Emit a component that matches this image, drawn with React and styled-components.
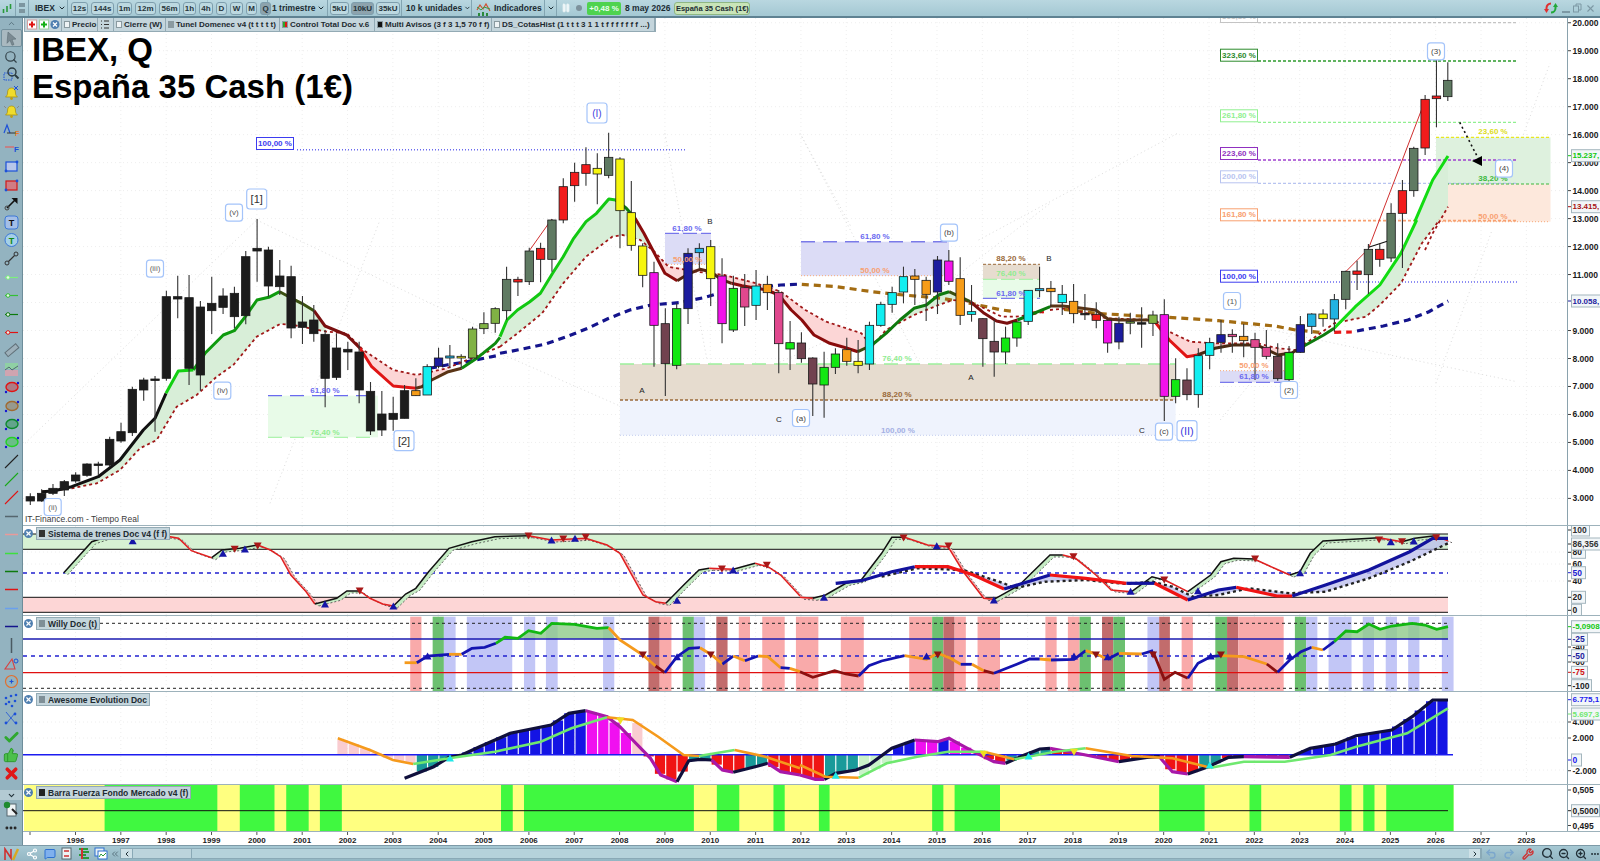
import React from 'react';
import styled, { createGlobalStyle } from 'styled-components';
import { ChevronDown, ChevronUp, Search, ZoomIn, ZoomOut, Share2, MessageSquare, Undo2, Redo2, Wrench, ChevronLeft, ChevronRight, ChevronsLeft, Check, ThumbsUp, X, Pause, MoreHorizontal } from 'lucide-react';

const GlobalStyle = createGlobalStyle`
  html, body { margin: 0; padding: 0; background: #fff; }
  body { font-family: "Liberation Sans", Arial, sans-serif; }
`;

const Page = styled.div`
  width: 1600px;
  height: 861px;
  overflow: hidden;
  display: flex;
  flex-direction: column;
`;

/* ---------- top toolbar ---------- */
const TopBar = styled.div`
  height: 18px;
  flex: none;
  display: flex;
  align-items: center;
  box-sizing: border-box;
  background: linear-gradient(#b9d7e0, #a4c8d3);
  border-bottom: 2px solid #5f8292;
  font-size: 8.5px;
  color: #1c2c33;
`;
const Group = styled.div`
  width: ${p => p.$w}px;
  flex: none;
  height: 100%;
  box-sizing: border-box;
  display: flex;
  align-items: center;
  justify-content: ${p => p.$center ? 'center' : 'flex-start'};
  gap: ${p => p.$gap || 0}px;
  padding-left: ${p => p.$pad || 0}px;
  border-right: ${p => p.$plain ? 'none' : '1px solid #83a5b2'};
  white-space: nowrap;
`;
const ToolBtn = styled.div`
  width: ${p => p.$w}px;
  height: 13px;
  flex: none;
  box-sizing: border-box;
  border: 1px solid #7e9ead;
  border-radius: 3px;
  background: ${p => p.$active ? '#8da3ad' : '#bcd8e0'};
  display: flex;
  align-items: center;
  justify-content: center;
  font-weight: bold;
  font-size: 8px;
  color: #26343a;
`;
const PctBadge = styled.div`
  width: 34px;
  height: 13px;
  background: #4fd34f;
  color: #eafff0;
  font-size: 8px;
  font-weight: bold;
  display: flex;
  align-items: center;
  justify-content: center;
  border-radius: 2px;
`;
const NameChip = styled.div`
  width: 76px;
  height: 13px;
  box-sizing: border-box;
  background: #c9e4b8;
  border: 1px solid #8fb783;
  border-radius: 3px;
  font-size: 7.5px;
  font-weight: bold;
  display: flex;
  align-items: center;
  justify-content: center;
`;
const Spacer = styled.div`
  flex: 1;
`;
const WinBtns = styled.div`
  width: 42px;
  display: flex;
  align-items: center;
  gap: 3px;
  color: #7c98a4;
  padding-left: 4px;
  box-sizing: border-box;
`;

/* ---------- body ---------- */
const Middle = styled.div`
  flex: 1;
  display: flex;
  min-height: 0;
`;
const Rail = styled.div`
  width: 23px;
  flex: none;
  box-sizing: border-box;
  background: #93b3c0;
  border-right: 1px solid #6e8d9a;
  display: flex;
  flex-direction: column;
  align-items: center;
`;
const RailTop = styled.div`
  height: 11px;
  flex: none;
  display: flex;
  align-items: center;
  color: #48626d;
`;
const RailItem = styled.div`
  width: 21px;
  height: 18.4px;
  flex: none;
  display: flex;
  align-items: center;
  justify-content: center;
  box-sizing: border-box;
  ${p => p.$active && 'background:#a9b9c0;border:1px solid #73919e;border-radius:2px;'}
`;
const RailFold = styled.div`
  width: 100%;
  height: 10px;
  margin-top: 7px;
  background: #b3cad3;
  display: flex;
  align-items: center;
  justify-content: center;
  color: #22323a;
`;
const Charts = styled.div`
  flex: 1;
  display: flex;
  flex-direction: column;
  min-width: 0;
`;
const PaneRow = styled.div`
  height: ${p => p.$h}px;
  flex: none;
  box-sizing: border-box;
  display: flex;
  border-bottom: 1px solid #9db2bb;
`;
const Plot = styled.div`
  position: relative;
  flex: 1;
  overflow: hidden;
`;
const AxisCol = styled.div`
  width: 33px;
  flex: none;
  box-sizing: border-box;
  border-left: 1px solid #8aa2ad;
`;
const Fill = styled.svg`
  display: block;
  width: 100%;
  height: 100%;
`;
const Title = styled.div`
  position: absolute;
  left: 9px;
  top: 13px;
  font-size: 33px;
  line-height: 37px;
  font-weight: bold;
  color: #000;
  white-space: nowrap;
`;
const Source = styled.div`
  position: absolute;
  left: 2px;
  bottom: 0;
  font-size: 8.5px;
  line-height: 11px;
  color: #3b3b3b;
`;
const LegendBar = styled.div`
  position: absolute;
  left: 1px;
  top: 0;
  height: 14px;
  display: flex;
  align-items: stretch;
  background: #c4d5dc;
  border: 1px solid #93aab4;
  border-top: none;
  box-sizing: border-box;
  font-size: 8px;
  font-weight: bold;
  color: #1d2a30;
`;
const LegendItem = styled.div`
  width: ${p => p.$w}px;
  flex: none;
  box-sizing: border-box;
  padding-left: 2px;
  display: flex;
  align-items: center;
  gap: 2px;
  white-space: nowrap;
  overflow: hidden;
  border-right: 1px solid #93aab4;
`;
const Swatch = styled.span`
  width: 6px;
  height: 7px;
  flex: none;
  box-sizing: border-box;
  background: ${p => p.$c};
  border: 1px solid ${p => p.$line || '#8a9aa0'};
`;
const PaneLegend = styled.div`
  position: absolute;
  left: 1px;
  top: 1px;
  height: 13px;
  box-sizing: border-box;
  display: flex;
  align-items: center;
  gap: 3px;
  font-size: 8.5px;
  font-weight: bold;
  color: #1d2a30;
  white-space: nowrap;
`;
const PaneLegendChip = styled.div`
  height: 13px;
  box-sizing: border-box;
  padding: 0 2px;
  display: flex;
  align-items: center;
  gap: 3px;
  background: #c4d5dc;
  border: 1px solid #93aab4;
`;
const CloseDot = styled.span`
  width: 9px;
  height: 9px;
  flex: none;
  border-radius: 50%;
  background: #4f7fb0;
  color: #fff;
  display: flex;
  align-items: center;
  justify-content: center;
`;
const TimeRow = styled.div`
  height: 13px;
  flex: none;
`;

/* ---------- bottom bar ---------- */
const BottomBar = styled.div`
  height: 16px;
  flex: none;
  display: flex;
  align-items: center;
  background: linear-gradient(#a6c8d3, #93b6c3);
  border-top: 1px solid #7d9aa7;
  box-sizing: border-box;
  color: #fff;
`;
const BarSlot = styled.div`
  width: ${p => p.$w}px;
  flex: none;
  display: flex;
  align-items: center;
  justify-content: center;
  height: 100%;
`;
const ScrollTrack = styled.div`
  flex: 1;
  height: 11px;
  display: flex;
  align-items: stretch;
  background: #b5d2db;
  border: 1px solid #8aa9b6;
  box-sizing: border-box;
`;
const ScrollBtn = styled.div`
  width: 11px;
  flex: none;
  background: #cfe1e7;
  border-right: 1px solid #8aa9b6;
  display: flex;
  align-items: center;
  justify-content: center;
  color: #22323a;
`;
const ScrollThumb = styled.div`
  width: 58px;
  flex: none;
  background: #bcd4dc;
  border-right: 1px solid #8aa9b6;
`;

/* ---------- chart text ---------- */
const Txt = styled.text`
  font-family: "Liberation Sans", Arial, sans-serif;
  font-size: ${p => p.$s || 8}px;
  font-weight: ${p => p.$n ? 'normal' : 'bold'};
  fill: ${p => p.$c || '#222'};
  text-anchor: ${p => p.$a || 'middle'};
  dominant-baseline: central;
`;

/* reading scales: points are noted per region of the chart */
const scaler = (ox, sx, oy) => pts => pts.map(([x, y]) => [ox + x / sx, oy + y / 3]);
const ML = scaler(0, 3, 120);
const MM = scaler(500, 2.85, 120);
const MR = scaler(1050, 2.85, 220);
const MT = scaler(800, 1.96, 0);
const LL = scaler(0, 1.96, 520);
const LR = scaler(800, 1.96, 520);
const str = pts => pts.map(p => p[0].toFixed(1) + ',' + p[1].toFixed(1)).join(' ');

const yearX = y => 75.5 + (y - 1996) * 45.34;
const candleX = i => 30.3 + (i - 1) * 11.34;

const COL = { k: '#1c1c1c', g: '#5f7a62', r: '#f21c1c', y: '#f6f60e', m: '#f212ea', b: '#71424f', l: '#12e812', n: '#1c1c9e', c: '#12eef0', o: '#f69c18', p: '#e0488e', t: '#22b2e2', v: '#80b244' };

const C1 = [
  [1120,1155,1130,1143,'k'],[1108,1145,1120,1143,'k'],[1092,1125,1105,1120,'k'],[1080,1128,1085,1110,'k'],[1057,1088,1065,1083,'k'],[1030,1070,1032,1066,'k'],[1025,1065,1032,1034,'k'],
  [950,1040,958,1035,'k'],[908,968,935,963,'k'],[800,948,808,938,'k'],[773,842,780,810,'k'],[768,935,777,780,'k'],[512,782,530,775,'k'],[467,595,530,537,'k'],[465,795,533,745,'k'],
  [543,812,561,765,'k'],[470,642,550,572,'k'],[505,582,528,562,'k'],[500,625,520,590,'k'],[393,613,410,587,'k'],[297,485,385,393,'k'],[380,530,390,498,'k'],[420,525,468,500,'k'],
  [437,655,470,624,'k'],[528,672,606,622,'k'],[555,665,600,641,'k'],[630,862,643,775,'k'],[640,780,684,772,'k'],[665,750,688,696,'k'],[665,850,696,810,'k'],[786,945,814,933,'k'],
  [813,948,882,930,'k'],[830,932,880,898,'k'],[795,895,812,895,'k'],[775,828,812,827,'o'],[733,825,740,825,'c'],[683,745,714,739,'n'],[675,745,708,714,'t'],[703,745,709,714,'y'],
  [620,715,627,714,'v'],[577,642,611,626,'v'],[562,638,566,610,'v'],
];
const C2 = [
  [440,600,478,572,'g'],[470,528,478,486,'r'],[383,495,393,485,'g'],[368,487,385,418,'r'],[297,455,300,418,'g'],[175,310,200,300,'r'],[128,245,157,197,'r'],[82,197,134,160,'r'],
  [100,253,145,162,'y'],[38,175,112,166,'g'],[112,385,117,272,'y'],[183,392,278,376,'y'],[370,502,378,466,'y'],[425,740,458,616,'m'],[565,828,611,731,'b'],[550,748,566,736,'l'],
  [385,612,400,566,'n'],[370,445,385,398,'t'],[360,558,380,476,'y'],[415,670,468,611,'m'],[467,636,505,630,'l'],[462,618,503,561,'p'],[450,600,498,556,'c'],[467,570,493,518,'o'],
  [510,760,518,671,'p'],[603,750,668,687,'l'],[637,728,669,716,'b'],[712,888,714,792,'b'],[695,893,742,795,'l'],[685,762,702,742,'l'],[653,737,689,724,'o'],[660,760,724,736,'y'],
  [605,750,616,732,'c'],[545,620,553,616,'c'],[500,578,518,553,'c'],[440,550,470,516,'c'],[447,555,468,478,'o'],[470,603,481,523,'o'],[408,582,420,516,'n'],[390,495,423,484,'m'],
  [412,615,476,586,'o'],[495,605,575,583,'c'],[595,740,596,656,'b'],[600,770,664,696,'b'],[620,732,654,696,'l'],[605,680,606,654,'l'],[510,615,511,604,'c'],[440,532,506,512,'t'],
];
const C3 = [
  [183,260,205,215,'o'],[195,285,223,248,'c'],[192,310,244,281,'o'],[222,300,280,283,'k'],[247,325,283,301,'r'],[300,398,301,369,'m'],[290,388,310,366,'n'],[278,343,305,309,'v'],
  [262,383,308,311,'k'],[272,348,285,310,'v'],[238,603,284,529,'m'],[415,550,479,529,'l'],[445,541,480,524,'b'],[385,563,407,524,'c'],[353,448,368,406,'c'],[300,398,344,367,'n'],
  [328,398,343,350,'p'],[312,412,349,362,'o'],[338,480,359,382,'p'],[330,418,382,409,'p'],[370,482,409,476,'b'],[378,483,398,479,'l'],[288,398,314,397,'n'],[280,342,282,319,'t'],
  [268,320,282,296,'y'],[222,335,239,297,'t'],[152,268,154,238,'g'],[122,210,153,163,'r'],[72,222,88,164,'g'],[70,140,88,118,'r'],
];
const C4 = [
  [610,786,640,774,'g'],[540,804,572,640,'r'],[440,590,445,572,'g'],[285,465,298,444,'r'],[180,382,288,296,'r'],[187,303,241,290,'g'],
];
const CANDLES = [
  ...C1.map(r => [120, ...r]), ...C2.map(r => [120, ...r]), ...C3.map(r => [220, ...r]), ...C4.map(r => [0, ...r]),
];

const FAST = [
  ['#111', ML([[125,1115],[160,1113],[215,1100],[295,1070],[360,1020],[430,930],[465,895],[498,820]])],
  ['#12d012', ML([[498,820],[535,753],[580,750]])],
  ['#0e9a0e', ML([[580,750],[615,700],[670,645],[703,632],[736,590],[771,540],[806,532],[839,515]])],
  ['#3a5010', ML([[839,515],[875,535],[905,550],[942,572]])],
  ['#7a1010', ML([[942,572],[975,618],[1040,645],[1080,685]])],
  ['#e01414', ML([[1080,685],[1115,740],[1180,798],[1248,805]])],
  ['#5a3415', ML([[1248,805],[1265,800],[1295,780],[1345,755],[1385,745]])],
  ['#0e8a0e', ML([[1385,745],[1430,715],[1486,670],[1500,652]])],
  ['#12c812', MM([[0,650],[20,600],[50,570],[85,545],[115,520],[150,460],[180,410],[210,355],[245,305],[275,280],[310,237],[330,240]])],
  ['#0e7a0e', MM([[330,240],[360,265],[385,295]])],
  ['#8a0c0c', MM([[385,295],[410,340],[440,400],[470,460],[505,482]])],
  ['#5a2412', MM([[505,482],[540,460],[570,448],[600,455],[630,478],[660,490]])],
  ['#8a0c0c', MM([[660,490],[690,497],[730,505],[760,510],[795,525],[830,570],[860,600],[895,645],[940,670],[985,683],[1020,695]])],
  ['#3a5010', MM([[1020,695],[1060,675]])],
  ['#0e7a0e', MM([[1060,675],[1100,640],[1140,600],[1180,565],[1215,555],[1250,525],[1280,515]])],
  ['#3a5010', MM([[1280,515],[1340,545]])],
  ['#7a1010', MM([[1340,545],[1380,580],[1415,603],[1445,610],[1475,600]])],
  ['#0e7a0e', MM([[1475,600],[1510,585],[1568,560]])],
  ['#5a3415', MR([[0,258],[36,258],[70,262],[130,270],[165,297],[200,300],[262,300],[295,300]])],
  ['#e01414', MR([[295,300],[340,360],[390,410],[420,405]])],
  ['#4a2a12', MR([[420,405],[470,385],[520,375],[590,375],[650,405],[690,398],[720,380]])],
  ['#0e7a0e', MR([[720,380],[780,345],[810,325]])],
  ['#12dc12', MR([[810,325],[870,260],[940,195],[1000,100],[1045,0]])],
  ['#12dc12', MT([[1205,665],[1240,540],[1270,468]])],
];
const SLOW = [
  ML([[125,1115],[215,1105],[290,1090],[360,1050],[420,985],[470,960],[530,860],[590,825],[650,770],[700,735],[770,650],[840,612],[880,615],[980,635],[1040,640],[1090,690],[1180,750],[1250,765],[1340,745],[1500,680]]),
  MM([[0,680],[50,640],[120,580],[180,490],[245,410],[320,350],[350,345],[400,360],[440,395],[480,440],[560,455],[640,465],[730,490],[800,515],[870,570],[930,605],[1030,640],[1060,680],[1100,630],[1180,585],[1250,555],[1290,540],[1340,545],[1430,590],[1470,590],[1510,585],[1550,575]]),
  MR([[0,270],[50,265],[160,295],[300,300],[340,335],[400,365],[470,370],[590,370],[650,385],[700,390],[750,355],[810,310],[900,290],[940,255],[1000,190],[1060,70],[1110,0]]),
  MT([[1225,750],[1240,700],[1270,620]]),
];
const AREAS = [
  ['#d8eed8', ML([[125,1115],[160,1113],[215,1100],[295,1070],[360,1020],[430,930],[465,895],[498,820],[535,753],[580,750],[615,700],[670,645],[703,632],[736,590],[771,540],[806,532],[839,515],[905,550],[942,572],[975,618],[980,635],[880,615],[840,612],[770,650],[700,735],[650,770],[590,825],[530,860],[470,960],[420,985],[360,1050],[290,1090],[215,1105]])],
  ['#fcd6d6', ML([[1080,685],[1115,740],[1180,798],[1248,805],[1295,780],[1345,755],[1340,745],[1250,765],[1180,750],[1090,690]])],
  ['#d8eed8', MM([[0,650],[20,600],[50,570],[85,545],[115,520],[150,460],[180,410],[210,355],[245,305],[275,280],[310,237],[330,240],[385,295],[410,340],[440,395],[400,360],[350,345],[320,350],[245,410],[180,490],[120,580],[50,640],[0,680]])],
  ['#fcd6d6', MM([[440,395],[470,460],[505,482],[570,448],[480,440]])],
  ['#fcd6d6', MM([[600,455],[630,478],[690,497],[760,510],[800,515],[730,490],[640,465]])],
  ['#fcd6d6', MM([[795,525],[830,570],[860,600],[895,645],[940,670],[985,683],[1020,695],[1060,680],[1030,640],[930,605],[870,570],[800,515]])],
  ['#d8eed8', MM([[1060,675],[1100,640],[1140,600],[1180,565],[1215,555],[1250,525],[1280,515],[1340,545],[1290,540],[1250,555],[1180,585],[1100,630]])],
  ['#fcd6d6', MR([[340,360],[390,410],[420,405],[470,385],[520,375],[470,370],[400,365],[340,335]])],
  ['#fcd6d6', MR([[590,375],[650,405],[690,398],[650,385]])],
  ['#d8eed8', MR([[810,325],[870,260],[940,195],[1000,100],[1045,0],[1110,0],[1060,70],[1000,190],[940,255],[900,290],[810,310]])],
  ['#d8eed8', MT([[1205,665],[1240,540],[1270,468],[1270,620],[1250,665]])],
];
const LONG_MA = [
  ['#14148c', ML([[1290,745],[1340,735],[1400,725],[1500,705]])],
  ['#14148c', MM([[0,700],[60,688],[130,672],[190,650],[250,625],[310,595],[370,570],[430,555],[510,548],[580,533],[640,515],[720,505],[800,495],[860,492]])],
  ['#a36c12', MM([[860,493],[960,500],[1060,515],[1150,525],[1260,535],[1340,550],[1430,570],[1470,575]])],
  ['#e81818', MM([[1510,580],[1550,575]])],
  ['#a36c12', MR([[40,268],[130,280],[290,290]])],
  ['#a36c12', MR([[340,292],[480,302],[640,318],[700,330],[780,338]])],
  ['#e81818', MR([[810,337],[860,336]])],
  ['#14148c', MR([[875,333],[950,318],[1020,300],[1080,275],[1135,243]])],
];
const DOTTED = [
  ML([[75,970],[770,300]]), ML([[770,300],[1500,650]]), ML([[810,1150],[1140,300]]),
  MM([[0,700],[530,945]]), MM([[340,945],[1000,630]]), MM([[470,40],[590,720]]), MM([[860,50],[1270,880]]), MM([[1140,600],[1568,250]]),
  MT([[0,400],[100,680]]), MT([[350,720],[740,400]]), MT([[1360,640],[1470,190]]),
  MR([[485,600],[720,300]]), MR([[540,310],[1330,485]]), MR([[1100,490],[1260,30]]),
];
const FIB_BOX = [
  [268,395.7,378,437.3,'#e8fbe8'], [665,233.3,711,264.3,'#dcdcf6'], [801,241.7,949,275.7,'#dcdcf6'],
  [983,264.3,1040,279.3,'#e6dccf'], [983,279.3,1040,298.3,'#e8fbe8'], [620,364,1175.6,400,'#e6dccf'],
  [620,400,1175.6,435.3,'#eff3fd'], [1220,370.7,1288,382.3,'#dcdcf6'], [1436,137.3,1550.5,184,'#def1de'], [1436,184,1550.5,221.7,'#fde8dc'],
];
const FIB_LINE = [
  [297,686,149.7,'#6a6af0','1 2',1.4],[268,378,395.7,'#6a6af0','14 8',1.2],[268,378,437.3,'#9cf09c','14 8',1],
  [665,711,233.3,'#5a5ae8','14 4',1],[665,711,264.3,'#f8a878','1 2',1],[801,949,241.7,'#7a7ae8','14 8',1.6],[801,949,275.7,'#f8a878','1 2',1],
  [983,1040,264.3,'#9a6a3a','3 2',1],[983,1040,279.3,'#9cf09c','14 4',1],[983,1040,298.3,'#5a5ae8','14 4',1],
  [620,1175.6,364,'#9cf09c','14 8',1.4],[620,1175.6,400,'#9a6a3a','3 2',1.4],[620,1175.6,435.3,'#c4ccee','1 2',1],
  [1220,1288,370.7,'#f8a878','1 2',1],[1220,1288,382.3,'#5a5ae8','14 4',1],
  [1258,1516,22.7,'#c4c4c4','3 2',1.2],[1258,1516,61,'#2c9a2c','3 2',1.5],[1258,1516,122.3,'#90f090','3 2',1.2],[1258,1516,160,'#a040d0','3 2',1.7],[1258,1516,183.3,'#b8c4f0','3 2',1.2],[1258,1516,220.7,'#f8a070','3 2',1.7],
  [1258,1517,282,'#6a6af0','1 2',1.4],[1436,1550,137.3,'#e8e820','3 2',1.2],[1436,1550,184,'#3cb83c','3 2',1.2],[1436,1550,221.7,'#f8a878','1 2',1],
];
const FIB_TEXT = [
  [325,390,'61,80 %','#6a6af0'],[325,432,'76,40 %','#90ec90'],[687,228,'61,80 %','#6a6af0'],[687.7,259,'50,00 %','#f8a070'],
  [875,236,'61,80 %','#6a6af0'],[875,270.7,'50,00 %','#f8a070'],[1011,258.7,'88,20 %','#9a6a3a'],[1011,273.7,'76,40 %','#90ec90'],[1011,293,'61,80 %','#6a6af0'],
  [897,358.3,'76,40 %','#90ec90'],[897,394,'88,20 %','#9a6a3a'],[898,430,'100,00 %','#a4b0e4'],[1254,365,'50,00 %','#f8a070'],[1254,376.7,'61,80 %','#6a6af0'],
  [1493,131.7,'23,60 %','#dcdc20'],[1493,178.3,'38,20 %','#3cb83c'],[1493,216,'50,00 %','#f8a070'],
];
const FIB_TAG = [
  [256,137,38,13,'100,00 %','#3c3cf0'],[1220,10,38,13,'361,80 %','#c4c4c4'],[1220,48.7,38,13,'323,60 %','#2c8a2c'],[1220,109.3,38,13,'261,80 %','#90f090'],
  [1220,147,38,13,'223,60 %','#9030c0'],[1220,170.3,38,13,'200,00 %','#b8c4f0'],[1220,208.3,38,13,'161,80 %','#f8a070'],[1220,269.7,38,13,'100,00 %','#3c3cf0'],
];
const WAVE = [
  [52.7,507,'(ii)',8,'#666'],[155,268.7,'(iii)',8,'#666'],[234,212.7,'(v)',8,'#555'],[256.7,199,'[1]',11,'#333'],[222.3,390.7,'(iv)',8,'#555'],[404,440.7,'[2]',11,'#333'],
  [597,113,'(I)',10,'#4040e0'],[801,418,'(a)',8,'#444'],[949,232.7,'(b)',8,'#444'],[1164,431.7,'(c)',8,'#444'],[1187,430.7,'(II)',11,'#4040e0'],[1232,301,'(1)',8,'#555'],
  [1289,390,'(2)',8,'#444'],[1436,51.3,'(3)',8,'#444'],[1504,168.7,'(4)',8,'#444'],
];
const LETTERS = [[642,390,'A'],[779,419,'C'],[971,377,'A'],[710,221,'B'],[1049,258.7,'B'],[1142,430,'C']];

const Grid = ({ top, bottom, rows }) => (
  <g stroke="#eeeeee" strokeDasharray="1 3">
    {Array.from({ length: 33 }, (_, i) => <line key={i} x1={yearX(1996 + i)} x2={yearX(1996 + i)} y1={top} y2={bottom} />)}
    {rows.map(y => <line key={y} x1={23} x2={1567} y1={y} y2={y} />)}
  </g>
);

const PRICE_ROWS = Array.from({ length: 18 }, (_, i) => 498.4 - i * 27.98);

const MainChart = () => (
  <>
    <Grid top={18} bottom={526} rows={PRICE_ROWS} />
    {DOTTED.map((p, i) => <polyline key={i} points={str(p)} fill="none" stroke="#dcdcdc" strokeDasharray="1 3" />)}
    {FIB_BOX.map((b, i) => <rect key={i} x={b[0]} y={b[1]} width={b[2] - b[0]} height={b[3] - b[1]} fill={b[4]} />)}
    {FIB_LINE.map((l, i) => <line key={i} x1={l[0]} x2={l[1]} y1={l[2]} y2={l[2]} stroke={l[3]} strokeDasharray={l[4]} strokeWidth={l[5]} />)}
    {AREAS.map((a, i) => <polygon key={i} points={str(a[1])} fill={a[0]} />)}
    {LONG_MA.map((l, i) => <polyline key={i} points={str(l[1])} fill="none" stroke={l[0]} strokeWidth="3.2" strokeDasharray="7 5" />)}
    {SLOW.map((p, i) => <polyline key={i} points={str(p)} fill="none" stroke="#a01818" strokeWidth="1.8" strokeDasharray="3 3" />)}
    {FAST.map((l, i) => <polyline key={i} points={str(l[1])} fill="none" stroke={l[0]} strokeWidth="3" strokeLinejoin="round" />)}
    <polyline points={str(MM([[85,390],[147,298]]))} fill="none" stroke="#d03030" />
    <polyline points={str(MR([[844,154],[908,86]]))} fill="none" stroke="#d03030" />
    <polyline points={str([[1368.6,248.3],[1425.5,99.3]])} fill="none" stroke="#d03030" />
    <polyline points={str(MR([[908,82],[972,60]]))} fill="none" stroke="#111" strokeWidth="1.2" />
    {CANDLES.map((c, i) => {
      const x = candleX(i + 1);
      const [b, wt, wb, bt, bb, k] = c;
      return (
        <g key={i}>
          <line x1={x} x2={x} y1={b + wt / 3} y2={b + wb / 3} stroke="#333" strokeWidth="1.1" />
          <rect x={x - 4.2} y={b + bt / 3} width="8.4" height={Math.max((bb - bt) / 3, 1.5)} fill={COL[k]} stroke="#1a1a1a" strokeWidth="0.8" />
        </g>
      );
    })}
    <line x1="1459.7" y1="122.3" x2="1478" y2="158" stroke="#111" strokeWidth="1.6" strokeDasharray="2 3" />
    <polygon points="1472,161 1482,156 1482,166" fill="#000" />
    {FIB_TEXT.map((t, i) => <Txt key={i} x={t[0]} y={t[1]} $c={t[3]}>{t[2]}</Txt>)}
    {FIB_TAG.map((t, i) => (
      <g key={i}>
        <rect x={t[0] + 0.5} y={t[1] + 0.5} width={t[2] - 1} height={t[3] - 1} fill="#fff" stroke={t[5]} />
        <Txt x={t[0] + t[2] / 2} y={t[1] + t[3] / 2} $c={t[5]}>{t[4]}</Txt>
      </g>
    ))}
    {WAVE.map((w, i) => {
      const s = w[3] > 8 ? 20 : 17;
      return (
        <g key={i}>
          <rect x={w[0] - s / 2} y={w[1] - s / 2} width={s} height={s} rx="3" fill="#fff" stroke="#a4c4fa" strokeWidth="1.2" />
          <Txt $n x={w[0]} y={w[1]} $s={w[3]} $c={w[4]}>{w[2]}</Txt>
        </g>
      );
    })}
    {LETTERS.map((t, i) => <Txt key={i} $n x={t[0]} y={t[1]} $c="#222">{t[2]}</Txt>)}
  </>
);

/* ---------- Sistema de trenes ---------- */
const OSC = [
  ['#111', LL([[125,158],[180,65],[220,45],[325,48]])],
  ['#e02020', LL([[325,48],[350,55],[375,92],[415,113]])],
  ['#111', LL([[415,113],[435,90],[470,85],[505,75]])],
  ['#e02020', LL([[505,75],[530,90],[550,110],[570,165],[600,215],[617,252]])],
  ['#111', LL([[617,252],[660,235],[680,213],[705,213]])],
  ['#e02020', LL([[705,213],[725,235],[750,252],[771,258]])],
  ['#111', LL([[771,258],[795,222],[815,205],[840,155],[880,85],[925,65],[970,50],[1036,47]])],
  ['#e02020', LL([[1036,47],[1081,60],[1148,55],[1190,75],[1215,100],[1240,170],[1260,225],[1285,245],[1305,250]])],
  ['#111', LL([[1305,250],[1340,195],[1370,150],[1390,145]])],
  ['#e02020', LL([[1390,145],[1437,148]])],
  ['#111', LL([[1437,148],[1480,130]])],
  ['#e02020', LL([[1480,130],[1505,140],[1530,165],[1568,228]])],
  ['#e02020', LR([[0,232],[25,235]])],
  ['#111', LR([[25,235],[50,225],[90,190],[120,180],[160,100],[180,52],[205,52]])],
  ['#e02020', LR([[205,52],[250,75],[290,80],[320,155],[360,235],[380,238]])],
  ['#111', LR([[380,238],[430,195],[490,105],[515,105]])],
  ['#e02020', LR([[515,105],[540,115],[580,165],[610,210],[650,215]])],
  ['#111', LR([[650,215],[690,170],[715,180]])],
  ['#e02020', LR([[715,180],[760,215]])],
  ['#111', LR([[760,215],[805,165],[825,125],[850,115],[890,117]])],
  ['#e02020', LR([[890,117],[930,145],[960,165]])],
  ['#111', LR([[960,165],[980,155],[1000,100],[1025,63],[1135,53]])],
  ['#e02020', LR([[1135,53],[1180,65]])],
  ['#111', LR([[1180,65],[1205,55],[1245,47]])],
  ['#e02020', LR([[1245,47],[1270,62]])],
];
const TRAIN = [
  ['#12129c', LR([[70,190],[120,182],[180,155],[225,140]])],
  ['#f01414', LR([[225,140],[290,140],[340,165],[400,207]])],
  ['#12129c', LR([[400,207],[490,165]])],
  ['#f01414', LR([[490,165],[560,175],[640,190]])],
  ['#12129c', LR([[640,190],[695,190]])],
  ['#f01414', LR([[695,190],[760,240]])],
  ['#12129c', LR([[760,240],[820,210],[855,202]])],
  ['#f01414', LR([[855,202],[935,228],[965,228]])],
  ['#12129c', LR([[965,228],[1030,195],[1115,150],[1195,95],[1240,55],[1270,55]])],
];
const TRAIN_SLOW = LR([[160,170],[230,145],[320,150],[400,190],[420,205],[480,185],[560,180],[640,192],[690,185],[730,200],[770,230],[820,225],[880,205],[960,220],[1030,215],[1115,175],[1195,125],[1270,70]]);
const TRAIN_AREA = LR([[160,165],[180,155],[225,140],[290,140],[340,165],[400,207],[490,165],[560,175],[640,190],[695,190],[760,240],[820,210],[855,202],[935,228],[965,228],[1030,195],[1115,150],[1195,95],[1240,55],[1270,55],[1270,70],[1195,125],[1115,175],[1030,215],[960,220],[880,205],[820,225],[770,230],[730,200],[690,185],[640,192],[560,180],[480,185],[420,205],[400,190],[320,150],[230,145]]);
const DOWN_TRI = [...LL([[325,48],[460,88],[505,78],[705,213],[1036,48],[1104,57],[1148,52],[1415,147],[1503,136]]), ...LR([[203,54],[291,78],[536,110],[714,180],[892,117],[1135,60],[1180,65],[1247,53]])];
const UP_TRI = [...LL([[260,62],[437,100],[480,87],[637,252],[771,258],[1081,60],[1127,55],[1327,241],[1437,150]]), ...LR([[47,232],[268,77],[380,240],[648,214],[780,212],[980,158],[1158,65],[1203,63]])];

const TriDown = ({ p, c }) => <polygon points={`${p[0] - 4},${p[1] - 3.5} ${p[0] + 4},${p[1] - 3.5} ${p[0]},${p[1] + 3.5}`} fill={c} />;
const TriUp = ({ p, c }) => <polygon points={`${p[0] - 4},${p[1] + 3.5} ${p[0] + 4},${p[1] + 3.5} ${p[0]},${p[1] - 3.5}`} fill={c} />;

const shift = (pts, dx, dy) => pts.map(p => [p[0] + dx, p[1] + dy]);

const SistemaChart = () => (
  <>
    <Grid top={526} bottom={616} rows={[552, 564, 581]} />
    <rect x="23" y="534" width="1425" height="15.3" fill="#d6f1d3" />
    <rect x="23" y="597.3" width="1425" height="15" fill="#fdd6d6" />
    <g stroke="#111">
      <line x1="23" x2="1448" y1="534" y2="534" /><line x1="23" x2="1448" y1="549.3" y2="549.3" />
      <line x1="23" x2="1448" y1="597.3" y2="597.3" /><line x1="23" x2="1448" y1="612.3" y2="612.3" />
    </g>
    <line x1="23" x2="1448" y1="573" y2="573" stroke="#2020d0" strokeWidth="1.6" strokeDasharray="4 4" />
    {OSC.map((l, i) => (
      <polygon key={i} points={str([...l[1], ...shift(l[1], 4, 2).reverse()])} fill={l[0] === '#111' ? '#c6ecc4' : '#f6b4b4'} />
    ))}
    {OSC.map((l, i) => <polyline key={i} points={str(shift(l[1], 4, 2))} fill="none" stroke="#444" strokeWidth="0.8" strokeDasharray="2 2" />)}
    <polygon points={str(TRAIN_AREA)} fill="#b9bcec" opacity="0.75" />
    <polyline points={str(TRAIN_SLOW)} fill="none" stroke="#222" strokeWidth="2.4" strokeDasharray="3 3" />
    {OSC.map((l, i) => <polyline key={i} points={str(l[1])} fill="none" stroke={l[0]} strokeWidth="1.5" />)}
    {TRAIN.map((l, i) => <polyline key={i} points={str(l[1])} fill="none" stroke={l[0]} strokeWidth="3.2" />)}
    {DOWN_TRI.map((p, i) => <TriDown key={i} p={p} c="#a81818" />)}
    {UP_TRI.map((p, i) => <TriUp key={i} p={p} c="#1616a8" />)}
  </>
);

/* ---------- Willy ---------- */
const BAND = { r: '#f9aaaa', g: '#6cc070', b: '#c2c6f6', d: '#c26c6c' };
const W_BANDS = [
  ...[[804,826,'r'],[848,870,'g'],[870,893,'b'],[915,1004,'b'],[1027,1049,'b'],[1070,1093,'b'],[1182,1204,'b'],[1271,1293,'d'],[1293,1316,'r'],[1338,1360,'g'],[1360,1382,'b'],[1404,1426,'d'],[1448,1470,'r'],[1494,1538,'r'],[1560,1568,'r']].map(b => [b[0] / 1.96, b[1] / 1.96, b[2]]),
  ...[[0,36,'r'],[80,125,'r'],[214,259,'r'],[259,281,'g'],[281,303,'d'],[303,325,'r'],[348,392,'r'],[481,503,'r'],[525,548,'r'],[548,570,'g'],[592,614,'d'],[614,637,'g'],[681,704,'b'],[704,725,'d'],[748,770,'r'],[814,837,'g'],[837,859,'d'],[859,948,'r'],[970,992,'g'],[992,1014,'b'],[1036,1081,'b'],[1103,1125,'b'],[1148,1170,'b'],[1192,1214,'b'],[1258,1281,'b']].map(b => [800 + b[0] / 1.96, 800 + b[1] / 1.96, b[2]]),
];
const OR = '#f59a1c'; const NV = '#1414b0'; const DR = '#8a1010'; const GR = '#12b812';
const W_LINE = [
  [OR, LL([[793,428],[817,428]])],[NV, LL([[817,428],[838,408],[880,403]])],[OR, LL([[880,403],[905,403]])],[NV, LL([[905,403],[925,385],[950,382],[972,370]])],
  [GR, LL([[972,370],[990,352],[1015,355],[1036,332],[1060,340],[1082,310],[1126,313],[1170,325],[1193,323]])],[OR, LL([[1193,323],[1215,360],[1260,405],[1285,438]])],
  [DR, LL([[1285,438],[1303,458]])],[NV, LL([[1303,458],[1327,410],[1350,385],[1372,383]])],[OR, LL([[1372,383],[1395,405],[1416,432]])],[NV, LL([[1416,432],[1437,408]])],
  [OR, LL([[1437,408],[1460,422]])],[NV, LL([[1460,422],[1486,408]])],[OR, LL([[1486,408],[1505,410],[1530,443]])],[NV, LL([[1530,443],[1548,445]])],[OR, LL([[1548,445],[1568,455]])],
  [DR, LR([[0,455],[25,472],[68,452],[90,462],[115,468]])],[NV, LR([[115,468],[135,437],[160,423],[205,407]])],[OR, LR([[205,407],[248,418],[270,400],[295,415],[315,433]])],
  [NV, LR([[315,433],[337,433]])],[OR, LR([[337,433],[360,452]])],[DR, LR([[360,452],[380,460]])],[NV, LR([[380,460],[425,433],[450,417],[470,417]])],[OR, LR([[470,417],[492,420]])],
  [NV, LR([[492,420],[537,418],[560,392]])],[OR, LR([[560,392],[582,403],[603,418]])],[NV, LR([[603,418],[625,400]])],[OR, LR([[625,400],[670,402]])],[NV, LR([[670,402],[692,392]])],
  [DR, LR([[692,395],[714,478],[735,457],[760,475]])],[NV, LR([[760,475],[780,430],[805,410],[825,407]])],[OR, LR([[825,407],[870,410],[915,432]])],[DR, LR([[915,432],[936,457]])],
  [NV, LR([[936,457],[960,420],[982,395],[1003,382]])],[OR, LR([[1003,382],[1025,390]])],[NV, LR([[1025,390],[1047,365]])],
  [GR, LR([[1047,365],[1070,333],[1092,335],[1115,312],[1137,328],[1160,318],[1200,310],[1225,315],[1248,328],[1270,320]])],
];
const WillyChart = () => (
  <>
    <Grid top={616} bottom={692} rows={[]} />
    {W_BANDS.map((b, i) => <rect key={i} x={b[0]} y="616.7" width={b[1] - b[0]} height="74.6" fill={BAND[b[2]]} />)}
    <polygon points={str(LL([[1015,355],[1036,332],[1060,340],[1082,310],[1126,313],[1170,325],[1193,323],[1205,357]]))} fill="#8fca8a" opacity="0.8" />
    <polygon points={str(LR([[1047,357],[1070,333],[1092,335],[1115,312],[1137,328],[1160,318],[1200,310],[1225,315],[1248,328],[1270,320],[1270,357]]))} fill="#8fca8a" opacity="0.8" />
    <line x1="100" x2="1448" y1="623.3" y2="623.3" stroke="#222" strokeDasharray="3 3" />
    <line x1="23" x2="1448" y1="688.3" y2="688.3" stroke="#222" strokeDasharray="3 3" />
    <line x1="23" x2="1448" y1="639" y2="639" stroke="#1a1ab0" strokeWidth="1.6" />
    <line x1="23" x2="1448" y1="656" y2="656" stroke="#2020d0" strokeWidth="1.6" strokeDasharray="4 4" />
    <line x1="23" x2="1448" y1="672.7" y2="672.7" stroke="#e01010" strokeWidth="1.2" />
    {W_LINE.map((l, i) => <polyline key={i} points={str(l[1])} fill="none" stroke={l[0]} strokeWidth="2.8" />)}
    {[...LL([[838,408],[1327,410]]), ...LR([[248,408],[537,408],[603,410],[805,408],[960,408]])].map((p, i) => <TriUp key={i} p={p} c="#1414b0" />)}
    {[...LL([[1260,405],[1393,405]]), ...LR([[270,405],[580,405],[692,405],[825,405]])].map((p, i) => <TriDown key={i} p={p} c="#8c1414" />)}
  </>
);

/* ---------- Awesome ---------- */
const A_OSC = [
  ['#10103c', LL([[793,775],[850,740],[880,712],[905,705],[940,680],[1000,640],[1080,615],[1115,580],[1148,572]])],
  ['#a818a8', LL([[1148,572],[1190,590],[1215,620],[1240,660],[1275,715],[1295,765],[1327,785]])],
  ['#10103c', LL([[1327,785],[1350,722],[1372,718],[1395,720]])],
  ['#a818a8', LL([[1395,720],[1416,750],[1437,757]])],
  ['#10103c', LL([[1437,757],[1480,740],[1505,730]])],
  ['#a818a8', LL([[1505,730],[1530,755],[1568,765]])],
  ['#a818a8', LR([[0,765],[30,778],[48,778]])],
  ['#10103c', LR([[48,778],[70,760],[110,750],[135,735],[180,685],[225,660]])],
  ['#a818a8', LR([[225,660],[270,665],[292,655],[310,670],[340,695],[380,725],[403,730]])],
  ['#10103c', LR([[403,730],[440,705],[470,687],[490,685]])],
  ['#a818a8', LR([[490,685],[560,705],[625,725]])],
  ['#10103c', LR([[625,725],[680,712],[705,710]])],
  ['#a818a8', LR([[705,712],[730,755],[760,762]])],
  ['#10103c', LR([[760,762],[800,740],[840,712],[870,710]])],
  ['#a818a8', LR([[870,710],[960,712]])],
  ['#10103c', LR([[960,712],[1000,685],[1050,672],[1090,647],[1160,630],[1200,590],[1240,540],[1270,540]])],
];
const LM = '#6fe86f';
const A_SIG = [
  [OR, LL([[662,655],[725,690],[770,720],[810,732]])],[LM, LL([[810,732],[880,715],[970,695],[1060,665],[1120,625],[1190,592]])],
  [OR, LL([[1190,592],[1240,600],[1290,650],[1340,705],[1370,708]])],[LM, LL([[1370,708],[1440,690]])],[OR, LL([[1440,690],[1500,710],[1568,745]])],
  [OR, LR([[0,735],[50,770],[115,773]])],[LM, LR([[115,773],[170,730],[230,710],[290,695],[360,695]])],[OR, LR([[360,695],[420,718]])],
  [LM, LR([[420,718],[500,695],[560,685]])],[OR, LR([[560,685],[650,708],[730,715],[805,743]])],[LM, LR([[805,743],[870,725],[950,725],[1040,705],[1090,680],[1190,640],[1270,565]])],
];
const interp = (lines, x) => {
  for (const l of lines) {
    const p = l[1];
    for (let i = 0; i < p.length - 1; i++) {
      if (x >= p[i][0] && x <= p[i + 1][0]) {
        const w = p[i + 1][0] - p[i][0] || 1;
        return p[i][1] + (p[i + 1][1] - p[i][1]) * (x - p[i][0]) / w;
      }
    }
  }
  return 754.7;
};
const PK = '#f9ccd0'; const TL = '#1a9a9a'; const BL = '#1414e4'; const MG = '#f010f0'; const RD = '#f01414'; const PG = '#caf2ca';
const BAR_RANGES = [
  [342,411,PK,1],[411,449,TL,0],[449,462,PK,0],[462,587,BL,0],[587,628,MG,0],[628,648,PK,1],[648,684,RD,0],[684,712,TL,0],[712,740,RD,0],[740,768,TL,0],[768,824.5,RD,0],
  [824.5,859,TL,0],[859,892,PG,1],[892,920,BL,0],[920,933,MG,0],[933,948,BL,0],[948,973,MG,0],[973,1004,RD,0],[1004,1050,TL,0],[1050,1193,RD,0],[1193,1223,TL,0],[1223,1290,RD,0],[1290,1460,BL,0],
];
const BARS = Array.from({ length: 99 }, (_, n) => {
  const x = candleX(n + 28) + 6;
  const r = BAR_RANGES.find(b => x >= b[0] && x < b[1]);
  if (!r) return null;
  return { x, c: r[2], y: interp(r[3] ? A_SIG : A_OSC, x) };
}).filter(Boolean);

const AwesomeChart = () => (
  <>
    <Grid top={692} bottom={785} rows={[722, 738, 770]} />
    {BARS.map((b, i) => <rect key={i} x={b.x - 5.1} width="10.2" y={Math.min(b.y, 754.7)} height={Math.abs(b.y - 754.7)} fill={b.c} />)}
    <line x1="23" x2="1453" y1="754.7" y2="754.7" stroke="#1c1cf0" strokeWidth="1.6" />
    {A_OSC.map((l, i) => <polyline key={i} points={str(l[1])} fill="none" stroke={l[0]} strokeWidth="3.2" />)}
    {A_SIG.map((l, i) => <polyline key={i} points={str(l[1])} fill="none" stroke={l[0]} strokeWidth="2.6" />)}
    {LL([[882,714]]).map((p, i) => <TriUp key={i} p={p} c="#1ee8e8" />)}
    {LR([[70,766],[448,708],[803,735]]).map((p, i) => <TriUp key={i} p={p} c="#1ee8e8" />)}
    {LL([[1216,603]]).map((p, i) => <TriDown key={i} p={p} c="#f0e020" />)}
    {LR([[360,703],[537,697]]).map((p, i) => <TriDown key={i} p={p} c="#f0e020" />)}
  </>
);

/* ---------- Barra fuerza ---------- */
const GREEN_L = [[205,426],[470,538],[561,605],[627,670],[982,1005],[1027,1360],[1405,1449],[1516,1538]];
const GREEN_R = [[37,58],[259,281],[303,392],[704,793],[881,904],[1058,1081],[1104,1126],[1149,1281]];
const BarraChart = () => (
  <>
    <rect x="24" y="785" width="1429.5" height="47" fill="#ffff80" />
    {GREEN_L.map((g, i) => <rect key={i} x={g[0] / 1.96} y="785" width={(g[1] - g[0]) / 1.96} height="47" fill="#40f840" />)}
    {GREEN_R.map((g, i) => <rect key={i} x={800 + g[0] / 1.96} y="785" width={(g[1] - g[0]) / 1.96} height="47" fill="#40f840" />)}
    <line x1="23" x2="1448" y1="810.7" y2="810.7" stroke="#111" />
  </>
);

/* axis: [y, text, colour, boxed, box width, font size] */
const AxisLabels = ({ items }) => items.map((a, i) => (
  <g key={i}>
    <line x1="1568" x2="1571" y1={a[0]} y2={a[0]} stroke={a[2] || '#444'} />
    {a[3] && <rect x="1571.5" y={a[0] - 6} width={a[4] || 30} height="12" fill="#f2f6f8" stroke="#a4b6be" />}
    <Txt x="1572.5" y={a[0]} $a="start" $s={a[5] || 8.5} $c={a[2] || '#1a1a1a'}>{a[1]}</Txt>
  </g>
));
const MAIN_AXIS = [
  ...[20,19,18,17,16,15,14,13,12,11,10,9,8,7,6,5,4,3].filter(n => n !== 10).map(n => [498.4 - (n - 3) * 27.98, n + '.000']),
  [155.7,'15.237,','#10c810',1,34,8],[206.7,'13.415,','#a81414',1,34,8],[301,'10.058,','#1c1c9e',1,34,8],
];
const S_AXIS = [[530,'100','#333',1,18],[552.3,'80','#222',1,14],[564,'60'],[581,'40'],[572.7,'50','#2020d0',1,14],[597.3,'20','#222',1,14],[610.3,'0','#222',1,10],[544,'86,356','#333',1,30]];
const W_AXIS = [[626.7,'-5,0908','#10c810',1,32,8],[647,'-40'],[662,'-60'],[639.3,'-25','#1c1c9e',1,16],[655.7,'-50','#1c1c9e',1,16],[672.3,'-75','#d01010',1,16],[685.7,'-100','#222',1,20]];
const A_AXIS = [[699.7,'6.775,1','#1c1cf0',1,32,8],[722,'4.000'],[714,'5.697,3','#6fe86f',1,32,8],[738,'2.000'],[760,'0','#1c1cf0',1,10],[770.7,'-2.000']];
const B_AXIS = [[790,'0,505'],[810.7,'0,5000','#222',1,28],[825.5,'0,495']];

const Pane = ({ top, h, axis, legend, children }) => (
  <PaneRow $h={h}>
    <Plot>
      <Fill viewBox={`23 ${top} 1544 ${h - 1}`} preserveAspectRatio="none">{children}</Fill>
      {legend}
    </Plot>
    <AxisCol>
      <Fill viewBox={`1568 ${top} 32 ${h - 1}`} preserveAspectRatio="none"><AxisLabels items={axis} /></Fill>
    </AxisCol>
  </PaneRow>
);

const Legend = ({ name, color }) => (
  <PaneLegend>
    <CloseDot><X size={7} strokeWidth={4} /></CloseDot>
    <PaneLegendChip><Swatch $c={color} $line={color} />{name}</PaneLegendChip>
  </PaneLegend>
);

const Ico = ({ children }) => <svg width="17" height="17" viewBox="0 0 17 17">{children}</svg>;

const Dash = ({ c, w = 1.5 }) => <Ico><line x1="2" x2="15" y1="8.5" y2="8.5" stroke={c} strokeWidth={w} /></Ico>;
const NodeDash = ({ c }) => <Ico><line x1="2" x2="15" y1="8.5" y2="8.5" stroke={c} strokeWidth="1.2" /><circle cx="5" cy="8.5" r="1.8" fill="#eaf6ea" stroke={c} /></Ico>;
const Oval = ({ c }) => <Ico><ellipse cx="9" cy="8" rx="6" ry="4.5" fill={c} fillOpacity="0.35" stroke={c} strokeWidth="1.4" /><circle cx="3" cy="13" r="1.2" fill="#1414d0" /><circle cx="15" cy="4" r="1.2" fill="#1414d0" /></Ico>;
const Diag = ({ c }) => <Ico><line x1="2" x2="15" y1="15" y2="2" stroke={c} strokeWidth="1.1" /></Ico>;
const Bell = () => <><path d="M8.5 3c3 0 4 2 4 5 0 2 1 3 2 4H2.5c1-1 2-2 2-4 0-3 1-5 4-5z" fill="#f0dc2c" stroke="#a08a10" strokeWidth="0.7" /><circle cx="8.5" cy="13.5" r="1.4" fill="#c0a010" /></>;

const RAIL_ICONS = [
  <Ico><path d="M5 2l8 7-4 .5 2 5-2 .8-2-5-3 3z" fill="#7b8a92" stroke="#55666e" strokeWidth="0.5" /></Ico>,
  <Search size={14} color="#33434a" strokeWidth={2} />,
  <Ico><rect x="1" y="7" width="8" height="7" fill="none" stroke="#1c50d8" strokeDasharray="1.5 1" /><circle cx="9" cy="6" r="4" fill="none" stroke="#2a3a40" strokeWidth="1.4" /><line x1="12" y1="9" x2="15.5" y2="12.5" stroke="#2a3a40" strokeWidth="2" /></Ico>,
  <Ico><Bell /><path d="M11 1l4 4M15 1l-4 4" stroke="#1c50d8" strokeWidth="1" /></Ico>,
  <Ico><Bell /><path d="M1 3l2 2M16 3l-2 2" stroke="#888" strokeWidth="1" /></Ico>,
  <Ico><path d="M1 11L4 3l3 8" fill="none" stroke="#1c50d8" strokeWidth="1.2" /><line x1="4" x2="13" y1="11" y2="11" stroke="#333" /><text x="12" y="14" fontSize="7" fontWeight="bold" fontFamily="Liberation Sans" fill="#e87820">F</text></Ico>,
  <Ico><line x1="2" x2="11" y1="7" y2="7" stroke="#e06060" strokeWidth="1.2" /><text x="11" y="12" fontSize="8" fontWeight="bold" fontFamily="Liberation Sans" fill="#1c50d8">F</text></Ico>,
  <Ico><rect x="3" y="4" width="11" height="9" fill="#b7c6ea" stroke="#1c50d8" strokeWidth="1.2" /><circle cx="3" cy="13" r="1.4" fill="#1c50d8" /><circle cx="14" cy="4" r="1.4" fill="#1c50d8" /></Ico>,
  <Ico><rect x="3" y="4" width="11" height="9" fill="#d07c84" stroke="#d01818" strokeWidth="1.2" /><circle cx="3" cy="13" r="1.4" fill="#1c50d8" /><circle cx="14" cy="4" r="1.4" fill="#1c50d8" /></Ico>,
  <Ico><line x1="4" y1="13" x2="13" y2="4" stroke="#111" strokeWidth="1.6" /><path d="M8.5 3h6v6z" fill="#111" /><circle cx="4" cy="13" r="2" fill="none" stroke="#444" /></Ico>,
  <Ico><rect x="2" y="2" width="13" height="13" rx="3" fill="#a4bfe6" stroke="#3c78d8" /><text x="8.5" y="12" textAnchor="middle" fontSize="9" fontWeight="bold" fontFamily="Liberation Sans" fill="#111">T</text></Ico>,
  <Ico><circle cx="8.5" cy="8" r="6.5" fill="#a4d0e6" stroke="#3c78d8" /><text x="8.5" y="11.5" textAnchor="middle" fontSize="9" fontWeight="bold" fontFamily="Liberation Sans" fill="#128a12">T</text></Ico>,
  <Ico><line x1="4" y1="13" x2="13" y2="4" stroke="#333" strokeWidth="1.2" /><circle cx="4" cy="13" r="2" fill="#93b3c0" stroke="#333" /><circle cx="13" cy="4" r="2" fill="#93b3c0" stroke="#333" /></Ico>,
  <NodeDash c="#7cf07c" />, <NodeDash c="#34c034" />, <NodeDash c="#0c7a0c" />, <NodeDash c="#e01414" />,
  <Ico><rect x="2" y="6" width="14" height="5" transform="rotate(-40 8.5 8.5)" fill="#9db0ba" stroke="#607078" /></Ico>,
  <Ico><rect x="2" y="2" width="13" height="6" fill="#8fd0a4" /><rect x="2" y="9" width="13" height="6" fill="#d0a4b0" /><path d="M2 9l4-3 3 3 6-4" fill="none" stroke="#506870" /></Ico>,
  <Oval c="#e01414" />, <Oval c="#a06a30" />, <Oval c="#0c8a2c" />, <Oval c="#22d022" />,
  <Diag c="#222" />, <Diag c="#1aa81a" />, <Diag c="#e01414" />,
  <Dash c="#55666e" />, <Dash c="#e99a9a" />, <Dash c="#3ee03e" />, <Dash c="#0e7a0e" />, <Dash c="#e01414" />, <Dash c="#6aa0ee" />, <Dash c="#14148c" />,
  <Ico><line x1="8.5" x2="8.5" y1="1" y2="16" stroke="#4a5a62" strokeWidth="1.5" /></Ico>,
  <Ico><path d="M2 14h10L9 4z" fill="none" stroke="#d84040" strokeWidth="1.1" /><circle cx="13" cy="6" r="2" fill="none" stroke="#1c50d8" /></Ico>,
  <Ico><circle cx="8.5" cy="8.5" r="6" fill="none" stroke="#e07030" strokeWidth="1.2" /><path d="M6.5 8.5h4M8.5 6.5v4" stroke="#1c50d8" strokeWidth="1.2" /></Ico>,
  <Ico><g fill="#1c50d8"><circle cx="3" cy="6" r="1.3" /><circle cx="8" cy="4" r="1.3" /><circle cx="13" cy="3" r="1.3" /><circle cx="6" cy="10" r="1.3" /><circle cx="12" cy="9" r="1.3" /><circle cx="9" cy="14" r="1.3" /><circle cx="3" cy="12" r="1.3" /></g></Ico>,
  <Ico><line x1="3" y1="2" x2="13" y2="14" stroke="#1c50d8" strokeWidth="0.8" /><line x1="3" y1="14" x2="12" y2="3" stroke="#1c50d8" strokeWidth="0.8" /><circle cx="3" cy="13" r="1.4" fill="#1c50d8" /><circle cx="12" cy="4" r="1.4" fill="#1c50d8" /><circle cx="13" cy="13" r="1.4" fill="#1c50d8" /></Ico>,
  <Check size={17} color="#2fa82f" strokeWidth={4} />,
  <ThumbsUp size={16} color="#2f9a2f" fill="#4cc04c" strokeWidth={1.5} />,
  <X size={17} color="#e01818" strokeWidth={5} />,
];

const TF = [['12s',17],['144s',23],['1m',15],['12m',21],['56m',21],['1h',13],['4h',14],['D',11],['W',13],['M',11],['Q',11,true]];
const VOL = [['5kU',19],['10kU',23,true],['35kU',24]];

const LEGENDS = [
  ['Precio', 36, '#eef3f5'], ['', 16, null], ['Cierre (W)', 52, '#eef3f5'], ['Tunel Domenec v4 (t t t t t)', 114, '#8a9aa0'],
  ['Control Total Doc v.6', 95, 'linear-gradient(90deg,#2ca82c 50%,#e01414 50%)'], ['Multi Avisos (3 f 3 1,5 70 f f)', 117, '#111'], ['DS_CotasHist (1 t t t 3 1 1 t f f f f f f f ...)', 163, '#eef3f5'],
];

const YEARS = Array.from({ length: 33 }, (_, i) => 1996 + i);

export default function App() {
  return (
    <Page>
      <GlobalStyle />
      <TopBar>
        <Group $w={16} $center>
          <svg width="11" height="11" viewBox="0 0 11 11"><g stroke="#2a9a3a" strokeWidth="1.6"><line x1="1.5" x2="1.5" y1="6" y2="10" /><line x1="5" x2="5" y1="3" y2="9" /><line x1="8.5" x2="8.5" y1="1" y2="6" /></g></svg>
        </Group>
        <Group $w={13} $center>
          <svg width="8" height="12" viewBox="0 0 8 12"><rect x="1" y="1" width="6" height="4" fill="#7d96a0" /><rect x="1" y="7" width="6" height="4" fill="#7d96a0" /></svg>
        </Group>
        <Group $w={39} $pad={6} $gap={3}><b>IBEX</b><ChevronDown size={8} strokeWidth={3} /></Group>
        <Group $w={200} $pad={3} $gap={3}>
          {TF.map(t => <ToolBtn key={t[0]} $w={t[1]} $active={t[2]}>{t[0]}</ToolBtn>)}
        </Group>
        <Group $w={60} $pad={4} $gap={2}><b>1 trimestre</b><ChevronDown size={8} strokeWidth={3} /></Group>
        <Group $w={74} $pad={2} $gap={2}>
          {VOL.map(t => <ToolBtn key={t[0]} $w={t[1]} $active={t[2]}>{t[0]}</ToolBtn>)}
        </Group>
        <Group $w={70} $pad={4} $gap={2}><b>10 k unidades</b><ChevronDown size={8} strokeWidth={3} /></Group>
        <Group $w={73} $pad={4} $gap={3}>
          <svg width="15" height="15" viewBox="0 0 15 15"><path d="M1 9l3-5 3 4 3-5 4 7" fill="none" stroke="#d05030" strokeWidth="1.2" /><path d="M1 6l4 3 3-3 6 2" fill="none" stroke="#38a048" strokeWidth="1" /><g fill="#2a8a3a"><rect x="2" y="12" width="2" height="3" /><rect x="6" y="11" width="2" height="4" /><rect x="10" y="12" width="2" height="3" /></g></svg>
          <b>Indicadores</b>
        </Group>
        <Group $w={12} $center><ChevronDown size={8} strokeWidth={3} /></Group>
        <Group $w={198} $pad={4} $gap={4} $plain>
          <Pause size={10} color="#eef6f8" fill="#eef6f8" />
          <svg width="8" height="8" viewBox="0 0 8 8"><circle cx="4" cy="4" r="3" fill="#7d929c" /></svg>
          <PctBadge>+0,48 %</PctBadge>
          <b>8 may 2026</b>
          <NameChip>España 35 Cash (1€)</NameChip>
        </Group>
        <Spacer />
        <BarSlot $w={15}>
          <svg width="14" height="14" viewBox="0 0 14 14">
            <path d="M7 2.5A4.5 4.5 0 0 0 2.5 7v2" fill="none" stroke="#e03030" strokeWidth="2" /><path d="M0 8h5L2.5 12z" fill="#e03030" />
            <path d="M7 11.5A4.5 4.5 0 0 0 11.5 7V5" fill="none" stroke="#22a83a" strokeWidth="2" /><path d="M9 6h5L11.5 2z" fill="#22a83a" />
          </svg>
        </BarSlot>
        <WinBtns>
          <svg width="8" height="10" viewBox="0 0 8 10"><line x1="0" x2="8" y1="9" y2="9" stroke="#7c98a4" strokeWidth="2" /></svg>
          <svg width="9" height="10" viewBox="0 0 9 10"><rect x="0.5" y="3" width="5" height="6" fill="none" stroke="#7c98a4" /><path d="M3 3V1h5v6H6" fill="none" stroke="#7c98a4" /></svg>
          <X size={11} strokeWidth={2.4} />
        </WinBtns>
      </TopBar>

      <Middle>
        <Rail>
          <RailTop><ChevronUp size={9} strokeWidth={2} /></RailTop>
          {RAIL_ICONS.map((ic, i) => <RailItem key={i} $active={i === 0}>{ic}</RailItem>)}
          <RailFold><ChevronDown size={9} strokeWidth={3} /></RailFold>
          <RailItem>
            <svg width="17" height="17" viewBox="0 0 17 17"><rect x="4" y="3" width="9" height="12" fill="#eef3f5" stroke="#55666e" /><circle cx="4" cy="4" r="3.2" fill="#1f8a2f" /><path d="M9 8l5 5" stroke="#222" strokeWidth="2" /></svg>
          </RailItem>
          <RailItem><MoreHorizontal size={14} color="#222" strokeWidth={3} /></RailItem>
        </Rail>

        <Charts>
          <Pane top={18} h={508} axis={MAIN_AXIS} legend={
            <>
              <Title>IBEX, Q<br />España 35 Cash (1€)</Title>
              <Source>IT-Finance.com - Tiempo Real</Source>
              <LegendBar>
                <LegendItem $w={37}>
                  <svg width="33" height="11" viewBox="0 0 33 11">
                    <rect x="0.5" y="1" width="9" height="9" fill="#fff" stroke="#d0a0a0" /><path d="M2 5.5h6M5 2.5v6" stroke="#e01414" strokeWidth="2" />
                    <rect x="12.5" y="1" width="9" height="9" fill="#fff" stroke="#a0d0a0" /><path d="M14 5.5h6M17 2.5v6" stroke="#14b014" strokeWidth="2" />
                    <circle cx="28" cy="5.5" r="4.5" fill="#4f7fb0" /><path d="M26 3.5l4 4M30 3.5l-4 4" stroke="#fff" strokeWidth="1.2" />
                  </svg>
                </LegendItem>
                {LEGENDS.map((l, i) => (
                  <LegendItem key={i} $w={l[1]}>
                    {l[2] ? <Swatch $c={l[2]} /> : <svg width="10" height="9" viewBox="0 0 10 9"><path d="M1 1h1M1 4.5h1M1 8h1M4 1h5M4 4.5h5M4 8h5" stroke="#333" /></svg>}
                    {l[0]}
                  </LegendItem>
                ))}
              </LegendBar>
            </>
          }>
            <MainChart />
          </Pane>
          <Pane top={526} h={90} axis={S_AXIS} legend={<Legend name="Sistema de trenes Doc v4 (f f)" color="#333" />}><SistemaChart /></Pane>
          <Pane top={616} h={76} axis={W_AXIS} legend={<Legend name="Willy Doc (t)" color="#7f8f97" />}><WillyChart /></Pane>
          <Pane top={692} h={93} axis={A_AXIS} legend={<Legend name="Awesome Evolution Doc" color="#7f8f97" />}><AwesomeChart /></Pane>
          <Pane top={785} h={47} axis={B_AXIS} legend={<Legend name="Barra Fuerza Fondo Mercado v4 (f)" color="#222" />}><BarraChart /></Pane>
          <TimeRow>
            <Fill viewBox="23 832 1577 13">
              <line x1="30" x2="30" y1="832" y2="835" stroke="#555" />
              {YEARS.map(y => (
                <g key={y}>
                  <line x1={yearX(y)} x2={yearX(y)} y1="832" y2="835" stroke="#555" />
                  <Txt x={yearX(y)} y="840" $c="#1c1c1c">{y}</Txt>
                </g>
              ))}
            </Fill>
          </TimeRow>
        </Charts>
      </Middle>

      <BottomBar>
        <BarSlot $w={23}>
          <svg width="16" height="14" viewBox="0 0 16 14"><path d="M1 13V2l6 9V2" fill="none" stroke="#d03030" strokeWidth="1.6" /><path d="M9 13l5-11" stroke="#d8a820" strokeWidth="2.4" /></svg>
        </BarSlot>
        <BarSlot $w={18}><Share2 size={12} strokeWidth={2.4} /></BarSlot>
        <BarSlot $w={17}><MessageSquare size={12} color="#2c6fd0" fill="#7fb0ee" /></BarSlot>
        <BarSlot $w={17}>
          <svg width="11" height="13" viewBox="0 0 11 13"><rect x="1" y="1" width="9" height="11" fill="#eef3f5" stroke="#55666e" /><path d="M3 4h5M3 9h5" stroke="#d03030" strokeWidth="1.6" /></svg>
        </BarSlot>
        <BarSlot $w={17}>
          <svg width="12" height="13" viewBox="0 0 12 13"><path d="M1 2h9M3 5h8M1 8h7M3 11h8" stroke="#2a9a3a" strokeWidth="2" /><path d="M4 1v11" stroke="#d03030" strokeWidth="2" /></svg>
        </BarSlot>
        <BarSlot $w={17}>
          <svg width="14" height="13" viewBox="0 0 14 13"><rect x="1" y="1" width="9" height="8" fill="#e6f0f4" stroke="#2c6fd0" /><rect x="4" y="4" width="9" height="8" fill="#fff" stroke="#2c6fd0" /><path d="M5 10l2-3 2 2 3-3" fill="none" stroke="#2a9a3a" /></svg>
        </BarSlot>
        <BarSlot $w={11}><ChevronsLeft size={10} color="#4a6470" /></BarSlot>
        <ScrollTrack>
          <ScrollBtn><ChevronLeft size={8} strokeWidth={3} /></ScrollBtn>
          <ScrollThumb />
          <Spacer />
          <ScrollBtn><ChevronRight size={8} strokeWidth={3} /></ScrollBtn>
        </ScrollTrack>
        <BarSlot $w={18}><Undo2 size={12} color="#7ba6cc" strokeWidth={2.6} /></BarSlot>
        <BarSlot $w={18}><Redo2 size={12} color="#7ba6cc" strokeWidth={2.6} /></BarSlot>
        <BarSlot $w={20}><Wrench size={12} color="#d03030" strokeWidth={2.6} /></BarSlot>
        <BarSlot $w={18}><Search size={13} color="#223038" strokeWidth={2.6} /></BarSlot>
        <BarSlot $w={16}><ZoomOut size={12} color="#223038" strokeWidth={2.6} /></BarSlot>
        <BarSlot $w={18}><ZoomIn size={12} color="#223038" strokeWidth={2.6} /></BarSlot>
        <BarSlot $w={10}><MoreHorizontal size={10} color="#223038" strokeWidth={3} /></BarSlot>
      </BottomBar>
    </Page>
  );
}
